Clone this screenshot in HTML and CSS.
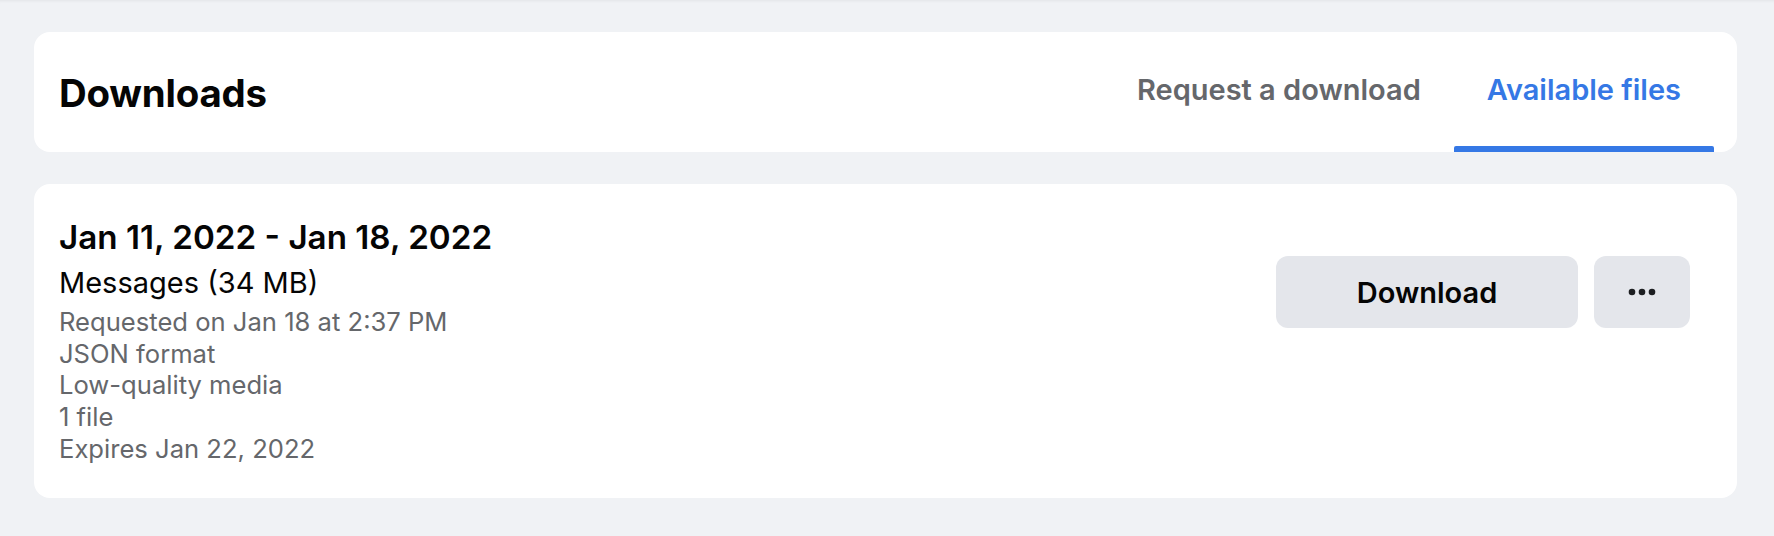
FILE: index.html
```html
<!DOCTYPE html>
<html lang="en">
<head>
<meta charset="utf-8">
<title>Downloads</title>
<link rel="stylesheet" href="styles.css">
</head>
<body>
<div class="page">
  <header class="card header-card">
    <h1 class="heading">Downloads</h1>
    <nav class="tabs">
      <div class="tab">Request a download</div>
      <div class="tab tab-active">Available files</div>
    </nav>
  </header>
  <section class="card file-card">
    <div class="file-info">
      <div class="file-title">Jan 11, 2022 - Jan 18, 2022</div>
      <div class="file-sub">Messages (34 MB)</div>
      <div class="file-meta">
        <div>Requested on Jan 18 at 2:37 PM</div>
        <div>JSON format</div>
        <div>Low-quality media</div>
        <div>1 file</div>
        <div>Expires Jan 22, 2022</div>
      </div>
    </div>
    <div class="actions">
      <button class="btn btn-download">Download</button>
      <button class="btn btn-more" aria-label="More">
        <svg width="28" height="8" viewBox="0 0 28 8"><circle cx="4" cy="4" r="3.3" fill="#1c1e21"/><circle cx="14" cy="4" r="3.3" fill="#1c1e21"/><circle cx="24" cy="4" r="3.3" fill="#1c1e21"/></svg>
      </button>
    </div>
  </section>
</div>
</body>
</html>
```
FILE: styles.css
```css
* { box-sizing: border-box; }
html, body { margin: 0; padding: 0; }
body {
  background: #f0f2f5;
  font-family: Inter, Roboto, "Liberation Sans", sans-serif;
  color: #050505;
  width: 1774px;
  height: 536px;
  overflow: hidden;
  box-shadow: inset 0 3px 3px -2px rgba(0,0,0,0.06);
}
.page {
  padding: 32px 37px 0 34px;
  display: flex;
  flex-direction: column;
  gap: 32px;
}
.card {
  background: #fff;
  border-radius: 16px;
}
.header-card {
  height: 120px;
  display: flex;
  justify-content: space-between;
  align-items: stretch;
  padding: 0 23px 0 25px;
}
.heading {
  margin: 0;
  align-self: center;
  font-size: 38.4px;
  font-weight: 700;
  letter-spacing: -0.2px;
  padding-top: 2px;
}
.tabs {
  display: flex;
  align-items: stretch;
}
.tab {
  display: flex;
  align-items: center;
  padding: 0 33px 6px;
  font-size: 29px;
  font-weight: 600;
  color: #65676b;
  position: relative;
}
.tab-active { color: #3578e5; }
.tab-active::after {
  content: "";
  position: absolute;
  left: 0;
  right: 0;
  bottom: 0;
  height: 6px;
  background: #3578e5;
  border-radius: 2px 2px 0 0;
}
.file-card {
  height: 314px;
  display: flex;
  justify-content: space-between;
  align-items: flex-start;
  padding: 28px 47px 0 25px;
}
.file-title {
  font-size: 33.2px;
  font-weight: 600;
  line-height: 48px;
  padding-top: 1px;
}
.file-sub {
  font-size: 29px;
  line-height: 42px;
  margin-top: 1px;
}
.file-meta {
  margin-top: 2px;
  font-size: 25.6px;
  line-height: 31.7px;
  color: #65676b;
}
.actions {
  display: flex;
  gap: 16px;
  margin-top: 44px;
}
.btn {
  border: 0;
  background: #e4e6eb;
  border-radius: 12px;
  height: 72px;
  font-family: inherit;
  color: #050505;
  display: flex;
  align-items: center;
  justify-content: center;
  padding: 0;
}
.btn-download {
  width: 302px;
  font-size: 29px;
  font-weight: 600;
}
.btn-more { width: 96px; }
```
